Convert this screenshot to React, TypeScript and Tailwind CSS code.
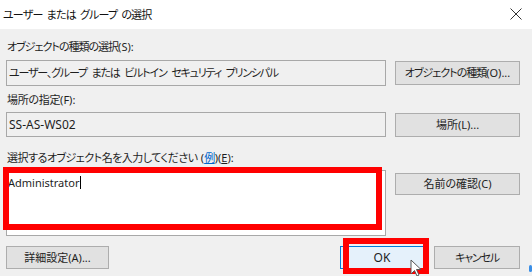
import React from "react";

const Btn = ({ children, className = "" }: { children: React.ReactNode; className?: string }) => (
  <div
    className={
      "flex items-center justify-center whitespace-nowrap border border-[#adadad] bg-[#e1e1e1] text-[11px] leading-[14px] text-[#1e1e1e] " +
      className
    }
  >
    {children}
  </div>
);

const L = ({ children }: { children: React.ReactNode }) => <span className="tracking-normal">{children}</span>;

export default function App() {
  return (
    <div className="relative flex h-[276px] w-[532px] flex-col overflow-hidden text-[#1e1e1e] [font-family:'Noto_Sans','Noto_Sans_CJK_JP',sans-serif] [font-feature-settings:'palt']">
      {/* title bar */}
      <div className="flex h-[29px] shrink-0 items-center justify-between bg-white pl-[3px] pr-[10px]">
        <span className="whitespace-pre text-[11px] leading-[14px] tracking-[-0.8px] text-[#111] [word-spacing:2px]">
          ユーザー または グループ の選択
        </span>
        <svg width="12" height="12" viewBox="0 0 12 12" className="mt-[-1px]">
          <path d="M0.5 0.5 L11.5 11.5 M11.5 0.5 L0.5 11.5" stroke="#333" strokeWidth="1" fill="none" />
        </svg>
      </div>

      {/* body */}
      <div className="flex flex-1 flex-col bg-[#f0f0f0] pl-[6px]">
        <div className="mt-[11px] h-[14px] whitespace-nowrap pl-px text-[11px] leading-[14px] tracking-[-1px]">
          オブジェクトの種類の選択<L>(S):</L>
        </div>
        <div className="mt-[6px] flex items-center">
          <div className="flex h-[26px] w-[380px] items-center whitespace-pre border border-[#a8a8a8] bg-[#f0f0f0] pl-[2px] text-[11px] leading-[14px] tracking-[-1.2px] [word-spacing:3px]">
            ユーザー、グループ または ビルトイン セキュリティ プリンシパル
          </div>
          <Btn className="ml-[9px] h-[24px] w-[125px] tracking-[-1px]">
            オブジェクトの種類<L>(O)...</L>
          </Btn>
        </div>

        <div className="mt-[7px] h-[14px] whitespace-nowrap pl-px text-[11px] leading-[14px] tracking-[-0.3px]">
          場所の指定<L>(F):</L>
        </div>
        <div className="mt-[5px] flex items-center">
          <div className="flex h-[25px] w-[380px] items-center border border-[#a8a8a8] bg-[#f0f0f0] pl-[2px] text-[12px] leading-[14px]">
            SS-AS-WS02
          </div>
          <Btn className="ml-[9px] h-[24px] w-[125px]">場所(L)...</Btn>
        </div>

        <div className="mt-[14px] h-[14px] whitespace-pre pl-px text-[11px] leading-[14px] tracking-[-0.5px] [word-spacing:1px]">
          選択するオブジェクト名を入力してください <L>(</L>
          <span className="text-[#0066cc] underline">例</span>
          <L>
            )(<span className="underline">E</span>):
          </L>
        </div>
        <div className="mt-[5px] flex items-start">
          <div className="h-[66px] w-[380px] border border-[#a8a8a8] bg-white pl-[1px] pt-[3px] text-[11px] leading-[14px]">
            Administrator<span className="ml-[1px] inline-block h-[13px] w-px translate-y-[2px] bg-black" />
          </div>
          <Btn className="ml-[9px] mt-[3px] h-[22px] w-[125px]">名前の確認(C)</Btn>
        </div>

        <div className="mt-[10px] flex items-center">
          <Btn className="h-[23px] w-[103px]">詳細設定(A)...</Btn>
          <div className="ml-[231px] flex h-[23px] w-[84px] items-center justify-center border border-[#0078d7] bg-[#e5f1fb] text-[12px] leading-[14px]">
            OK
          </div>
          <Btn className="ml-[10px] h-[23px] w-[86px] tracking-[-1.2px]">キャンセル</Btn>
        </div>
      </div>

      {/* annotation overlays */}
      <div className="absolute left-[3px] top-[167px] h-[63px] w-[379px] border-[6px] border-[#ff0000]" />
      <div className="absolute left-[343px] top-[238px] h-[36px] w-[86px] border-[6px] border-[#ff0000]" />

      {/* mouse cursor */}
      <svg className="absolute left-[410px] top-[259px]" width="14" height="18" viewBox="0 0 14 18">
        <path d="M1 1 L1 15 L4.5 11.5 L7 17 L9 16 L6.5 10.5 L11 10.5 Z" fill="#fff" stroke="#555" strokeWidth="1" />
      </svg>
      <div className="absolute left-[529px] top-[265px] h-[7px] w-[3px] rounded-sm bg-[#3a8ee6]" />
    </div>
  );
}
